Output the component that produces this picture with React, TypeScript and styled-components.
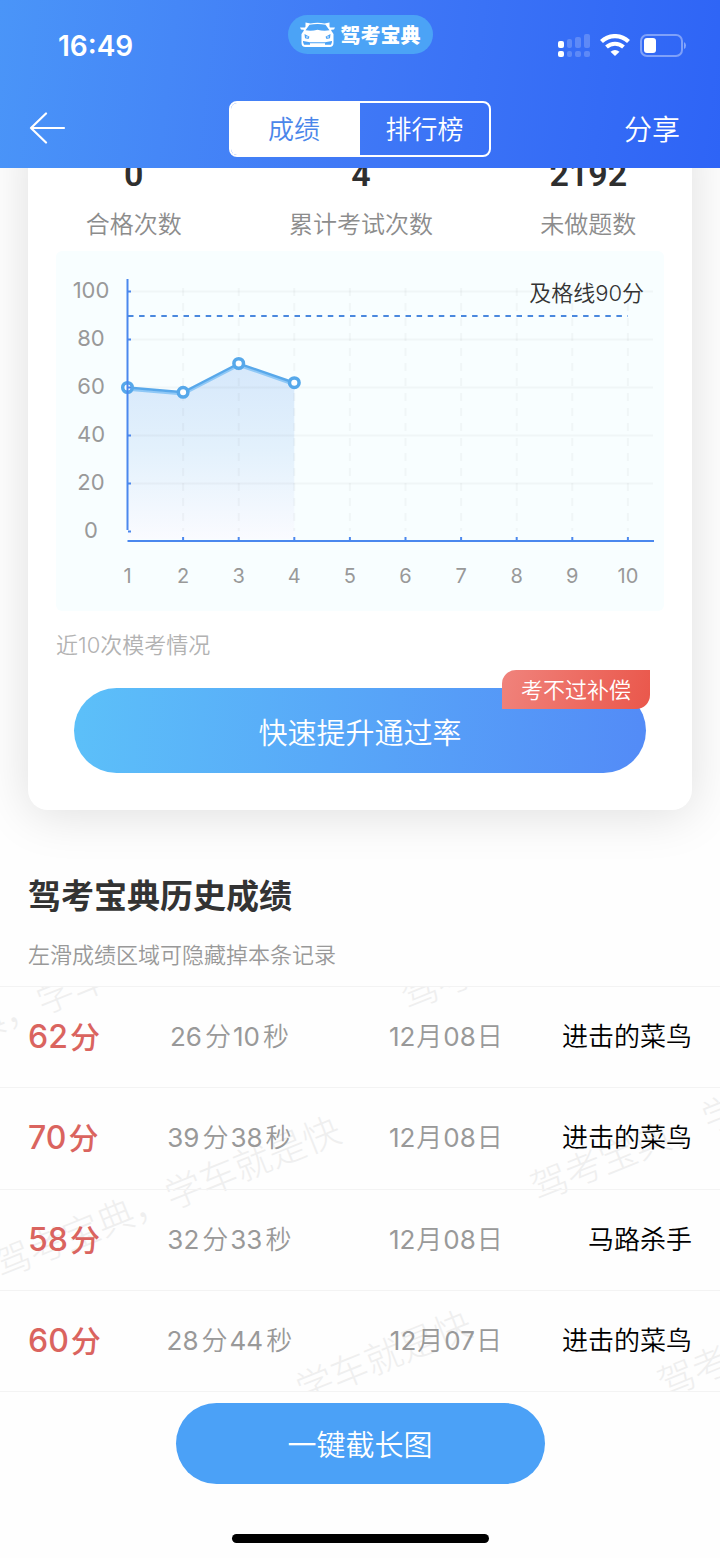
import React from 'react';
import styled, { createGlobalStyle } from 'styled-components';

const cjk = '"Noto Sans CJK SC", sans-serif';
const mixed = 'Inter, "Noto Sans CJK SC", sans-serif';

const GlobalStyle = createGlobalStyle`
  * { box-sizing: border-box; }
  body { margin: 0; background: #fefefe; font-family: ${cjk}; font-weight: 350; color: #333; }
  button { font: inherit; border: 0; padding: 0; margin: 0; background: none; cursor: pointer; }
`;

const Header = styled.header`
  position: sticky;
  top: 0;
  z-index: 5;
  color: #fff;
  background: linear-gradient(97deg, #4a95f8 0%, #4079f6 48%, #2e64f6 100%);
`;

const StatusBar = styled.div`
  display: grid;
  grid-template-columns: 1fr auto 1fr;
  align-items: center;
  height: 92px;
  padding: 0 34px 0 58px;
`;

const Clock = styled.time`
  font: 600 28px/32px ${mixed};
`;

const BrandPill = styled.div`
  align-self: start;
  display: flex;
  align-items: center;
  gap: 6px;
  height: 39px;
  margin: 15px 24px 0 0;
  padding: 0 12px;
  border-radius: 20px;
  background: #4ba3f6;
  font-size: 20px;
  font-weight: 900;
  line-height: 24px;
`;

const StatusIcons = styled.div`
  display: flex;
  align-items: center;
  justify-content: flex-end;
  gap: 10px;
`;

const NavBar = styled.nav`
  display: grid;
  grid-template-columns: 1fr 262px 1fr;
  align-items: center;
  height: 76px;
  padding: 0 40px 2px;
`;

const BackButton = styled.button`
  display: flex;
  align-items: center;
  width: 40px;
  height: 40px;
  margin-left: -12px;
`;

const ShareButton = styled.button`
  justify-self: end;
  padding-bottom: 3px;
  color: #fff;
  font-size: 28px;
  line-height: 40px;
`;

const Segments = styled.div`
  display: flex;
  height: 56px;
  border: 2px solid #fff;
  border-radius: 8px;
  overflow: hidden;
`;

const Segment = styled.button<{ $active?: boolean }>`
  width: 50%;
  padding-bottom: 2px;
  padding-right: ${(p) => (p.$active ? 3 : 0)}px;
  font-size: 26px;
  line-height: 40px;
  color: ${(p) => (p.$active ? '#4a86ea' : '#fff')};
  background: ${(p) => (p.$active ? '#fff' : 'transparent')};
`;

const Main = styled.main`
  overflow: hidden;
`;

const Card = styled.section`
  margin: -48px 28px 0;
  padding: 32px 28px 37px;
  border-radius: 20px;
  background: #fff;
  box-shadow: 0 4px 50px rgba(0, 0, 0, 0.13);
`;

const Stats = styled.dl`
  display: grid;
  grid-template-columns: repeat(3, 1fr);
  margin: 0 -38px 0 -36px;
  text-align: center;
`;

const Stat = styled.div`
  display: flex;
  flex-direction: column-reverse;
  gap: 11px;
`;

const StatValue = styled.dd`
  margin: 0;
  font: 600 34px/44px Roboto, sans-serif;
  color: #2f2f2f;
`;

const StatLabel = styled.dt`
  font-size: 24px;
  line-height: 32px;
  color: #8c8c8c;
`;

const ChartBox = styled.figure`
  margin: 12px 0 0;
`;

const ChartSvg = styled.svg`
  display: block;
  width: 100%;
  border-radius: 6px;
  background: #f8feff;
`;

const AxisText = styled.text<{ $size: number }>`
  font: 400 ${(p) => p.$size}px Inter, sans-serif;
  fill: #999;
  text-anchor: middle;
`;

const PassText = styled.text`
  font: 350 22px ${mixed};
  fill: #333;
  text-anchor: end;
`;

const Caption = styled.figcaption`
  margin-top: 18px;
  font-family: ${mixed};
  font-size: 22px;
  line-height: 32px;
  color: #b2b2b2;
`;

const BoostButton = styled.button`
  position: relative;
  display: block;
  width: calc(100% - 36px);
  height: 85px;
  margin: 27px 18px 0;
  border-radius: 43px;
  color: #fff;
  font-size: 29px;
  line-height: 40px;
  background: linear-gradient(95deg, #5cc0f9, #538bf7);
`;

const Badge = styled.span`
  position: absolute;
  top: -18px;
  right: -4px;
  height: 39px;
  padding: 0 19px;
  border-radius: 14px 0 14px 0;
  font-size: 22px;
  line-height: 37px;
  background: linear-gradient(105deg, #f0837c, #ea574b);
`;

const HistoryHead = styled.div`
  padding: 60px 28px 17px;
`;

const Title = styled.h2`
  margin: 0 0 19px;
  font-size: 33px;
  line-height: 48px;
  font-weight: 600;
  color: #333;
`;

const Hint = styled.p`
  margin: 0;
  font-size: 22px;
  line-height: 32px;
  color: #999;
`;

const ListWrap = styled.div`
  position: relative;
  overflow: hidden;
  border-top: 1px solid #f3f3f3;
`;

const Watermark = styled.span<{ $x: number; $y: number }>`
  position: absolute;
  left: ${(p) => p.$x}px;
  top: ${(p) => p.$y}px;
  font-size: 37px;
  font-weight: 300;
  line-height: 40px;
  white-space: nowrap;
  color: #efefef;
  transform: rotate(-22deg);
  transform-origin: 19px 20px;
  pointer-events: none;
`;

const Records = styled.table`
  position: relative;
  width: 100%;
  height: 405px;
  table-layout: fixed;
  border-spacing: 0;
`;

const Cell = styled.td<{ $width: number }>`
  width: ${(p) => p.$width}%;
  padding: 0;
  border-bottom: 1px solid #f3f3f3;
  text-align: center;
  white-space: nowrap;
  font-family: ${mixed};
  font-size: 26px;
  font-weight: 400;
  line-height: 40px;
  color: #999;
`;

const ScoreCell = styled(Cell)`
  padding-left: 28px;
  text-align: left;
  font-size: 32px;
  font-weight: 500;
  color: #da645f;
`;

const NameCell = styled(Cell)`
  padding-right: 28px;
  text-align: right;
  font-weight: 350;
  color: #000;
`;

const Unit = styled.span`
  margin: 0 2px 0 3px;
  font-weight: 350;
`;

const DateUnit = styled(Unit)`
  margin: 0 1px;
`;

const ScoreUnit = styled(Unit)`
  margin: 0 0 0 2px;
  font-size: 30px;
  font-weight: 500;
`;

const Footer = styled.footer`
  display: flex;
  flex-direction: column;
  align-items: center;
  padding: 11px 0 15px;
`;

const CaptureButton = styled.button`
  width: 51.25%;
  height: 81px;
  padding-bottom: 2px;
  border-radius: 41px;
  color: #fff;
  font-size: 29px;
  line-height: 40px;
  background: #4ba1f7;
`;

const HomeIndicator = styled.div`
  width: 257px;
  height: 9px;
  margin-top: 50px;
  border-radius: 5px;
  background: #000;
`;

const CarIcon = () => (
  <svg width="35" height="26" viewBox="0 0 35 26" aria-hidden="true">
    <path d="M5.500 0.500 L10.500 1.500 Q17.500 .2 24.500 1.500 L29.500 .5 L29.500 4.500 L31.500 9 L33.500 12 V21 Q33.500 25 29.500 25 H5.500 Q1.500 25 1.500 21 V12 L3.500 9 L5.500 4.500Z" fill="#fff" />
    <path d="M0 5.500 H5 V8 L1 7.500Z M35 5.500 H30 V8 L34 7.500Z" fill="#fff" />
    <path d="M9.500 2.800 Q17.500 1.200 25.500 2.800 L29.500 8.200 Q24 9.300 17.500 7.800 Q11 9.300 5.500 8.200Z" fill="#4ba3f6" />
    <path d="M4.500 12 L9.500 14.800 L8.500 17 L5 16.200Z M30.500 12 L25.500 14.800 L26.500 17 L30 16.200Z" fill="#4ba3f6" />
    <circle cx="7" cy="15" r=".8" fill="#fff" />
    <circle cx="28" cy="15" r=".8" fill="#fff" />
    <path d="M3 19 L10 20.200 H25 L32 19 V20 L31 22.800 H25 L25 21.200 H10 V22.800 H4 L3 20Z" fill="#4ba3f6" />
  </svg>
);

const SignalIcon = () => (
  <svg width="33" height="24" viewBox="0 0 33 24" fill="#fff" role="img" aria-label="signal">
    <rect x="1" y="7" width="6" height="7" rx="2" />
    <rect x="1" y="17" width="6" height="6" rx="2" />
    <g opacity=".2">
      <rect x="10" y="5" width="5" height="9" rx="2" />
      <rect x="18" y="3" width="6" height="11" rx="2" />
      <rect x="27" y="0" width="6" height="14" rx="2" />
      <rect x="10" y="17" width="5" height="6" rx="2" />
      <rect x="18" y="17" width="6" height="6" rx="2" />
      <rect x="27" y="17" width="6" height="6" rx="2" />
    </g>
  </svg>
);

const WifiIcon = () => (
  <svg width="30" height="24" viewBox="0 0 30 24" fill="none" stroke="#fff" role="img" aria-label="wifi">
    <path d="M1.500 7.500 A19.500 19.500 0 0 1 28.500 7.500" strokeWidth="4.200" />
    <path d="M6.500 13 A12.500 12.500 0 0 1 23.500 13" strokeWidth="4" />
    <path d="M15 22 L10.500 17.800 Q15 14.300 19.500 17.800Z" fill="#fff" stroke="none" />
  </svg>
);

const BatteryIcon = () => (
  <svg width="46" height="24" viewBox="0 0 46 24" role="img" aria-label="battery">
    <rect x="1" y="1" width="41" height="21" rx="6" fill="none" stroke="#fff" strokeOpacity=".38" strokeWidth="2" />
    <path d="M44 8 Q46 9 46 11.500 Q46 14 44 15Z" fill="#fff" fillOpacity=".42" />
    <rect x="4" y="4" width="12" height="15" rx="3" fill="#fff" />
  </svg>
);

const BackIcon = () => (
  <svg width="40" height="34" viewBox="0 0 40 34" fill="none" stroke="#fff" strokeWidth="2.200" strokeLinecap="round" strokeLinejoin="round" aria-hidden="true">
    <path d="M18 1.500 L3 16 L18 30.500 M3 16 H36" />
  </svg>
);

const scores = [60, 58, 70, 62];
const px = (i: number) => 71.5 + i * 55.6;
const py = (v: number) => 280.5 - v * 2.4;

function ScoreChart() {
  const line = scores.map((v, i) => `${px(i)},${py(v)}`).join(' ');
  const ten = Array.from({ length: 10 }, (_, i) => i);
  return (
    <ChartSvg viewBox="0 0 608 360" role="img" aria-label="近10次模考情况">
      <defs>
        <linearGradient id="area" x1="0" y1="0" x2="0" y2="1">
          <stop offset="0" stopColor="#d6e8fb" />
          <stop offset=".5" stopColor="#e3f1fc" />
          <stop offset="1" stopColor="#fafbff" />
        </linearGradient>
      </defs>
      <polygon points={`${px(0)},288 ${line} ${px(3)},288`} fill="url(#area)" />
      {[20, 40, 60, 80, 100].map((v) => (
        <line key={v} x1="72" x2="597" y1={py(v)} y2={py(v)} stroke="#5a5a5a" strokeOpacity=".05" strokeWidth="2" />
      ))}
      {ten.slice(1).map((i) => (
        <line key={i} x1={px(i)} x2={px(i)} y1="37" y2="280" stroke="#5a5a5a" strokeOpacity=".05" strokeWidth="2" strokeDasharray="8 7" />
      ))}
      <line x1="72" x2="572" y1="65" y2="65" stroke="#4a88de" strokeWidth="2" strokeDasharray="5.500 5.600" />
      <polyline points={line} transform="translate(0 2)" fill="none" stroke="#8fc8f6" strokeWidth="2.500" />
      <polyline points={line} fill="none" stroke="#58a8ea" strokeWidth="2.500" />
      {scores.map((v, i) => (
        <circle key={i} cx={px(i)} cy={py(v)} r="4.800" fill="#fff" stroke="#56a8ea" strokeWidth="3.500" />
      ))}
      <g stroke="#4b88ee" strokeWidth="2">
        <line x1="71.500" x2="71.500" y1="28" y2="279" />
        <line x1="71.500" x2="598" y1="290" y2="290" />
        {[0, 20, 40, 60, 80, 100].map((v) => (
          <line key={v} x1="72" x2="75" y1={py(v)} y2={py(v)} />
        ))}
        {ten.slice(1).map((i) => (
          <line key={i} x1={px(i)} x2={px(i)} y1="286" y2="290" />
        ))}
      </g>
      {[0, 20, 40, 60, 80, 100].map((v) => (
        <AxisText key={v} $size={22} x="35" y={py(v) + 6}>{v}</AxisText>
      ))}
      {ten.map((i) => (
        <AxisText key={i} $size={20} x={px(i)} y="332">{i + 1}</AxisText>
      ))}
      <PassText x="588" y="50">及格线90分</PassText>
    </ChartSvg>
  );
}

const stats = [
  { label: '合格次数', value: '0' },
  { label: '累计考试次数', value: '4' },
  { label: '未做题数', value: '2192' },
];

const records = [
  { score: 62, min: 26, sec: 10, day: '08', name: '进击的菜鸟' },
  { score: 70, min: 39, sec: 38, day: '08', name: '进击的菜鸟' },
  { score: 58, min: 32, sec: 33, day: '08', name: '马路杀手' },
  { score: 60, min: 28, sec: 44, day: '07', name: '进击的菜鸟' },
];

const watermarks = [
  [-136, 55],
  [400, -18],
  [-7, 250],
  [530, 173],
  [124, 444],
  [657, 369],
];

export default function App() {
  return (
    <>
      <GlobalStyle />
      <Header>
        <StatusBar>
          <Clock>16:49</Clock>
          <BrandPill><CarIcon />驾考宝典</BrandPill>
          <StatusIcons><SignalIcon /><WifiIcon /><BatteryIcon /></StatusIcons>
        </StatusBar>
        <NavBar>
          <BackButton aria-label="返回"><BackIcon /></BackButton>
          <Segments>
            <Segment $active>成绩</Segment>
            <Segment>排行榜</Segment>
          </Segments>
          <ShareButton>分享</ShareButton>
        </NavBar>
      </Header>
      <Main>
        <Card>
          <Stats>
            {stats.map((s) => (
              <Stat key={s.label}>
                <StatLabel>{s.label}</StatLabel>
                <StatValue>{s.value}</StatValue>
              </Stat>
            ))}
          </Stats>
          <ChartBox>
            <ScoreChart />
            <Caption>近10次模考情况</Caption>
          </ChartBox>
          <BoostButton>
            快速提升通过率
            <Badge>考不过补偿</Badge>
          </BoostButton>
        </Card>
        <HistoryHead>
          <Title>驾考宝典历史成绩</Title>
          <Hint>左滑成绩区域可隐藏掉本条记录</Hint>
        </HistoryHead>
        <ListWrap>
          {watermarks.map(([x, y]) => (
            <Watermark key={x} $x={x} $y={y} aria-hidden="true">驾考宝典，学车就是快</Watermark>
          ))}
          <Records>
            <tbody>
              {records.map((r) => (
                <tr key={r.score}>
                  <ScoreCell $width={17}>{r.score}<ScoreUnit>分</ScoreUnit></ScoreCell>
                  <Cell $width={30}>{r.min}<Unit>分</Unit>{r.sec}<Unit>秒</Unit></Cell>
                  <Cell $width={30}>12<DateUnit>月</DateUnit>{r.day}<DateUnit>日</DateUnit></Cell>
                  <NameCell $width={23}>{r.name}</NameCell>
                </tr>
              ))}
            </tbody>
          </Records>
        </ListWrap>
        <Footer>
          <CaptureButton>一键截长图</CaptureButton>
          <HomeIndicator />
        </Footer>
      </Main>
    </>
  );
}
